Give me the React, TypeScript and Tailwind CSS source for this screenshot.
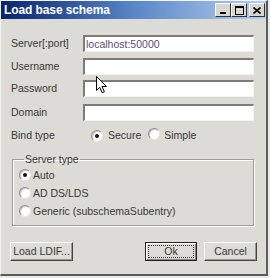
import React from "react";

function Radio({ checked }: { checked?: boolean }) {
  return (
    <span className="relative inline-block w-[12px] h-[12px] shrink-0 rounded-full bg-white border border-[#8c8c8c] border-b-[#e6e6e6] border-r-[#e6e6e6] shadow-[inset_1px_1px_0_#c8c8c8]">
      {checked && <span className="absolute left-[3px] top-[3px] w-[4px] h-[4px] rounded-full bg-[#111]" />}
    </span>
  );
}

function Field({ label, value, className }: { label: string; value?: string; className?: string }) {
  return (
    <div className={`flex items-center ${className ?? ""}`}>
      <span className="w-[72px] text-[#383838]">{label}</span>
      <div className="w-[171px] h-[17px] bg-white border-t-2 border-l-2 border-t-[#7c7c7c] border-l-[#7c7c7c] border-b border-r border-b-[#f2f2f2] border-r-[#f2f2f2] pl-[1px] leading-[14px] text-[#5d4f6c]">
        {value}
      </div>
    </div>
  );
}

function Button({ children, def, className }: { children: React.ReactNode; def?: boolean; className?: string }) {
  return (
    <div
      className={`h-[19px] flex items-center justify-center text-[#383838] bg-[#dedcd6] ${
        def
          ? "border border-[#222] shadow-[inset_1px_1px_0_#fff,inset_-1px_-1px_0_#808080]"
          : "border border-t-[#fafafa] border-l-[#fafafa] border-b-[#444] border-r-[#444] shadow-[inset_-1px_-1px_0_#9a9a9a]"
      } ${className ?? ""}`}
    >
      {def ? (
        <span className="w-[46px] h-[13px] flex items-center justify-center border border-dotted border-[#333]">{children}</span>
      ) : (
        children
      )}
    </div>
  );
}

function TitleBtn({ children, className }: { children: React.ReactNode; className?: string }) {
  return (
    <div
      className={`w-[16px] h-[14px] flex items-center justify-center bg-[#d8d6d0] border border-t-[#fafafa] border-l-[#fafafa] border-b-[#333] border-r-[#333] ${className ?? ""}`}
    >
      {children}
    </div>
  );
}

export default function App() {
  return (
    <div className="relative w-[270px] h-[278px] bg-[#ebebeb] font-['Liberation_Sans',Arial,sans-serif] text-[10.5px] leading-[13px]">
      <div className="w-[268px] h-[276px] flex flex-col bg-[#dddbd5] border-l border-t border-l-[#f4f4f4] border-t-[#f4f4f4] border-r-2 border-b-2 border-r-[#5a5a5a] border-b-[#5a5a5a]">
        {/* title bar */}
        <div className="h-[18px] flex items-center justify-between pl-[3px] pr-[1px] bg-gradient-to-r from-[#0a246a] via-[#5a86c6] to-[#b8d0ec]">
          <span className="text-white font-bold text-[12px] tracking-[-0.1px]">Load base schema</span>
          <div className="flex items-center">
            <TitleBtn>
              <svg width="8" height="8" viewBox="0 0 8 8">
                <rect x="1" y="6" width="6" height="2" fill="#000" />
              </svg>
            </TitleBtn>
            <TitleBtn>
              <svg width="9" height="9" viewBox="0 0 9 9" fill="none">
                <rect x="0.5" y="0.5" width="8" height="8" stroke="#000" />
                <rect x="0" y="0" width="9" height="2" fill="#000" />
              </svg>
            </TitleBtn>
            <TitleBtn className="ml-[2px]">
              <svg width="8" height="7" viewBox="0 0 8 7">
                <path d="M0.5 0.5 L7.5 6.5 M7.5 0.5 L0.5 6.5" stroke="#000" strokeWidth="1.6" />
              </svg>
            </TitleBtn>
          </div>
        </div>

        {/* form */}
        <div className="pl-[10px]">
          <Field label="Server[:port]" value="localhost:50000" className="mt-[16px]" />
          <Field label="Username" className="mt-[6px]" />
          <Field label="Password" className="mt-[5px]" />
          <Field label="Domain" className="mt-[7px]" />

          <div className="flex items-center mt-[8px] h-[13px] text-[#383838]">
            <span className="w-[80px]">Bind type</span>
            <Radio checked />
            <span className="ml-[5px]">Secure</span>
            <span className="ml-[7px]">
              <Radio />
            </span>
            <span className="ml-[4px]">Simple</span>
          </div>

          <fieldset className="mt-[11px] ml-[1px] w-[242px] border border-[#9c9c9a] shadow-[inset_1px_1px_0_#fff,1px_1px_0_#fff] pl-[6px] pb-[5px] text-[#383838]">
            <legend className="ml-[5px] px-[1px] leading-[13px]">Server type</legend>
            <div className="h-[18px] flex items-center">
              <Radio checked />
              <span className="ml-[2px]">Auto</span>
            </div>
            <div className="h-[18px] flex items-center">
              <Radio />
              <span className="ml-[2px]">AD DS/LDS</span>
            </div>
            <div className="h-[18px] flex items-center">
              <Radio />
              <span className="ml-[2px]">Generic (subschemaSubentry)</span>
            </div>
          </fieldset>

          <div className="mt-[16px] -ml-px w-[247px] flex justify-between">
            <Button className="w-[63px]">Load LDIF...</Button>
            <div className="flex gap-[7px]">
              <Button def className="w-[52px]">Ok</Button>
              <Button className="w-[53px]">Cancel</Button>
            </div>
          </div>
        </div>
      </div>

      {/* mouse pointer */}
      <svg className="absolute left-[96px] top-[76px]" width="12" height="18" viewBox="0 0 12 18">
        <path d="M0.5 0.5 L0.5 14.5 L3.8 11.3 L6.2 16.8 L8.4 15.8 L6 10.5 L10.5 10.5 Z" fill="#fff" stroke="#000" strokeWidth="1" strokeLinejoin="round" />
      </svg>
    </div>
  );
}
